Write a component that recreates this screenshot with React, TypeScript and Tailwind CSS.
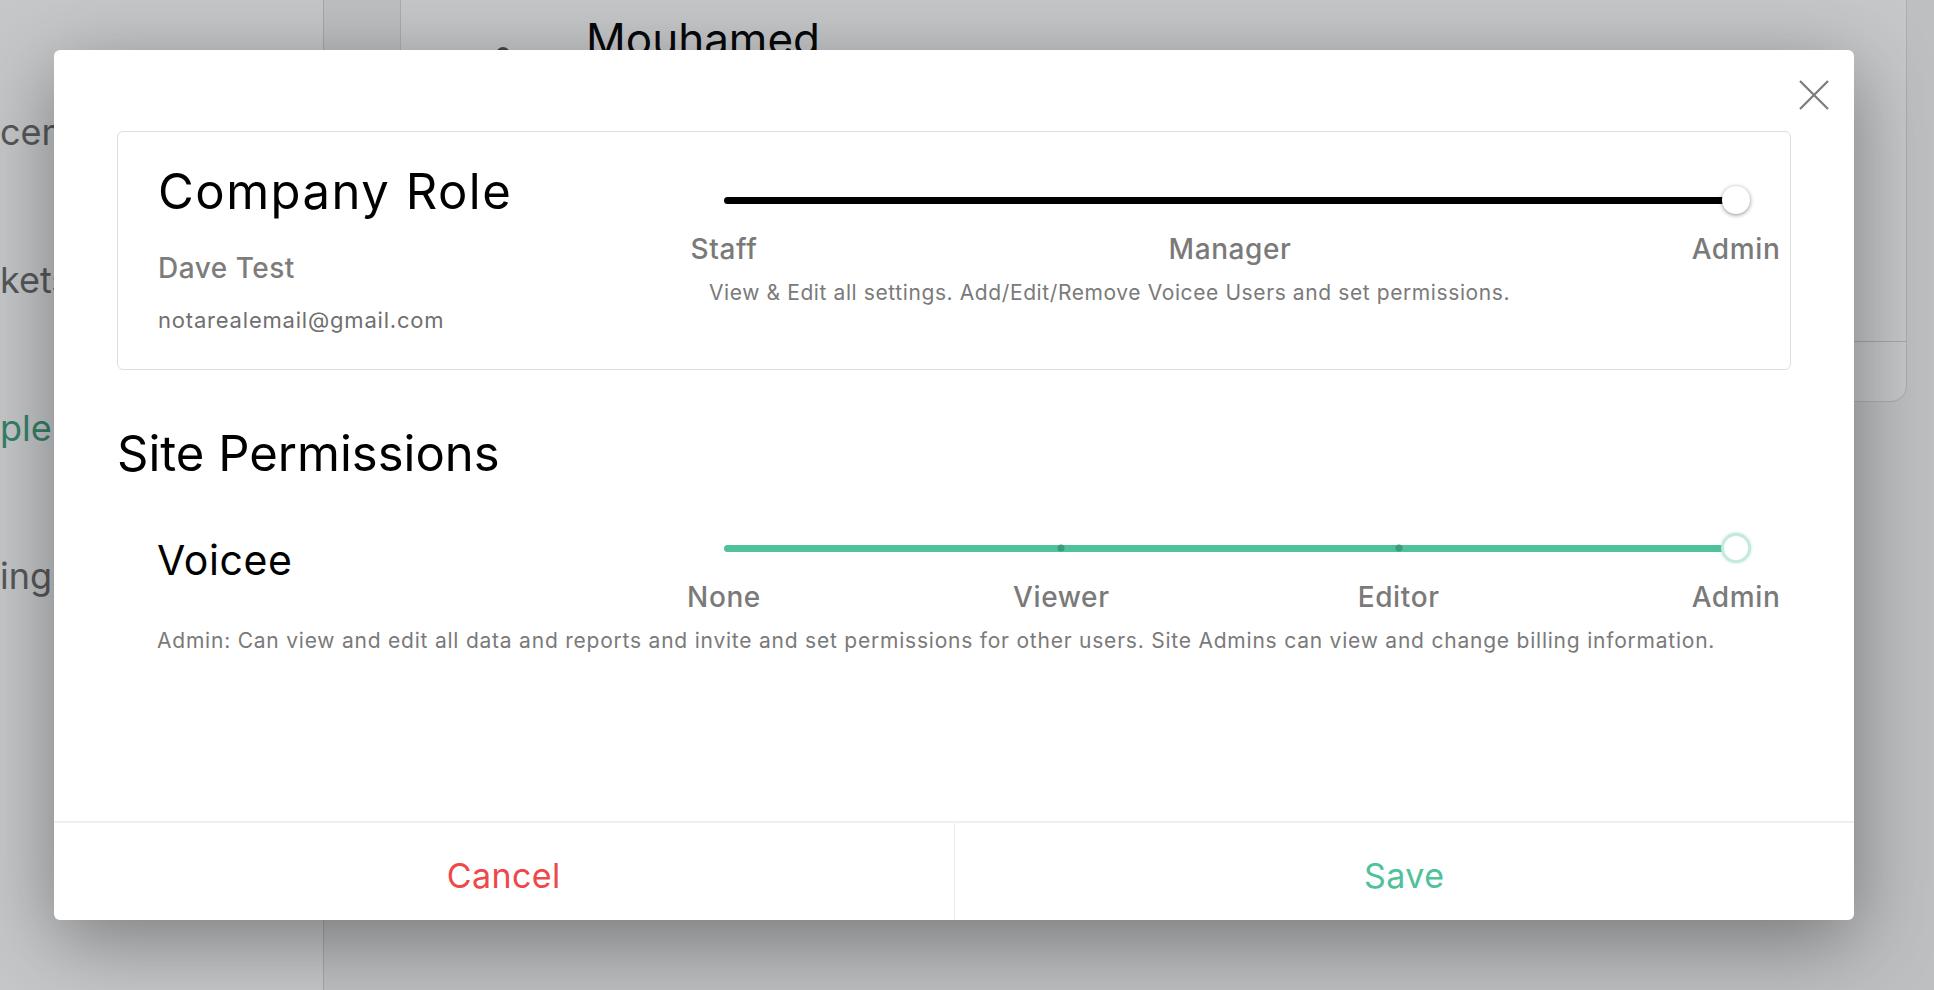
import React from "react";

type Variant = "dark" | "teal";

function StepSlider({ labels, variant }: { labels: string[]; variant: Variant }) {
  const steps = labels.length - 1;
  return (
    <div className="w-[1012px]">
      <div className="relative flex h-[30px] items-center">
        <div
          className={`h-[7px] w-full rounded-full ${
            variant === "dark" ? "bg-black" : "bg-[#4fc19b]"
          }`}
        />
        {variant === "teal" &&
          labels.slice(1, -1).map((l, i) => (
            <span
              key={l}
              className="absolute top-1/2 h-[7px] w-[7px] -translate-x-1/2 -translate-y-1/2 rounded-full bg-[#3a9c7b]"
              style={{ left: `${((i + 1) / steps) * 100}%` }}
            />
          ))}
        {variant === "dark" ? (
          <span className="absolute right-0 top-1/2 h-[28px] w-[28px] translate-x-1/2 -translate-y-1/2 rounded-full bg-white shadow-[0_1px_4px_rgba(0,0,0,0.45)]" />
        ) : (
          <span className="absolute right-0 top-1/2 h-[30px] w-[30px] translate-x-1/2 -translate-y-1/2 rounded-full border-[3px] border-[#c3eadc] bg-white shadow-[0_0_3px_rgba(79,193,155,0.4)]" />
        )}
      </div>
      <div className="relative mt-[17px] h-[34px]">
        {labels.map((l, i) => (
          <span
            key={l}
            className="absolute top-0 -translate-x-1/2 whitespace-nowrap text-[28px] font-medium leading-[34px] tracking-[0.6px] text-[#7a7a7a]"
            style={{ left: `${(i / steps) * 100}%` }}
          >
            {l}
          </span>
        ))}
      </div>
    </div>
  );
}

function CloseIcon() {
  return (
    <svg width="30" height="30" viewBox="0 0 30 30" fill="none">
      <path d="M1 1L29 29M29 1L1 29" stroke="#7b7b7b" strokeWidth="2.2" />
    </svg>
  );
}

function Background() {
  const items = [
    { text: "cements", color: "text-[#6b6b6b]" },
    { text: "kets", color: "text-[#6b6b6b]" },
    { text: "ple", color: "text-[#3fa37f]" },
    { text: "ings", color: "text-[#6b6b6b]" },
  ];
  return (
    <div className="flex h-full">
      <aside className="flex w-[324px] shrink-0 flex-col gap-[104px] border-r border-[#d4d4d6] bg-white pt-[110px]">
        {items.map((it) => (
          <span key={it.text} className={`text-[36px] leading-[44px] ${it.color}`}>
            {it.text}
          </span>
        ))}
      </aside>
      <main className="flex-1 pl-[76px] pr-[27px]">
        <div className="flex h-[402px] flex-col rounded-b-2xl border-x border-b border-[#dcdcde] bg-white">
          <div className="flex flex-1 items-start gap-[76px] pl-[95px] pt-[13px]">
            <span className="mt-[34px] h-[14px] w-[14px] rounded-full bg-[#555]" />
            <span className="text-[44px] leading-[52px] text-black">Mouhamed</span>
          </div>
          <div className="h-[60px] border-t border-[#d4d4d6]" />
        </div>
      </main>
    </div>
  );
}

export default function App() {
  return (
    <div className="relative h-[990px] w-full overflow-hidden bg-[#f4f4f5] [font-family:Inter,sans-serif]">
      <Background />
      <div className="absolute inset-0 bg-[rgba(27,31,39,0.25)]" />

      <div className="absolute left-[54px] top-[50px] flex h-[870px] w-[1800px] flex-col rounded-md bg-white shadow-[0_20px_80px_rgba(0,0,0,0.38)]">
        <button className="absolute right-[25px] top-[30px]">
          <CloseIcon />
        </button>

        <div className="px-[63px] pt-[81px]">
          <div className="flex h-[239px] rounded-md border border-[#dedede]">
            <div className="w-[568px] shrink-0 pl-[40px] pt-[32px]">
              <h2 className="text-[49px] leading-[55px] tracking-[1.5px] text-black">
                Company Role
              </h2>
              <p className="mt-[33px] text-[28px] font-medium leading-[32px] tracking-[0.5px] text-[#7c7c7c]">
                Dave Test
              </p>
              <p className="mt-[22px] text-[22px] leading-[28px] tracking-[0.8px] text-[#6f6f6f]">
                notarealemail@gmail.com
              </p>
            </div>
            <div className="pt-[53px]">
              <div className="ml-[38px]">
                <StepSlider labels={["Staff", "Manager", "Admin"]} variant="dark" />
              </div>
              <p className="ml-[23px] mt-[13px] text-[21px] leading-[28px] tracking-[0.6px] text-[#7a7a7a]">
                View &amp; Edit all settings. Add/Edit/Remove Voicee Users and set permissions.
              </p>
            </div>
          </div>

          <h2 className="mt-[56px] text-[49px] leading-[55px] text-black">Site Permissions</h2>

          <div className="mt-[52px] flex items-start">
            <div className="w-[607px] shrink-0 pl-[40px]">
              <h3 className="mt-[3px] text-[41px] leading-[48px] tracking-[0.6px] text-black">
                Voicee
              </h3>
            </div>
            <StepSlider labels={["None", "Viewer", "Editor", "Admin"]} variant="teal" />
          </div>
          <p className="mt-[13px] pl-[40px] text-[21px] leading-[28px] tracking-[0.78px] text-[#7a7a7a]">
            Admin: Can view and edit all data and reports and invite and set permissions for other
            users. Site Admins can view and change billing information.
          </p>
        </div>

        <div className="mt-auto flex h-[99px] border-t-2 border-[#efefef]">
          <button className="flex flex-1 items-center justify-center border-r border-[#ececec] pt-[8px] text-[34px] tracking-[0.4px] text-[#ef4848]">
            Cancel
          </button>
          <button className="flex flex-1 items-center justify-center pt-[8px] text-[34px] tracking-[0.4px] text-[#4fc19b]">
            Save
          </button>
        </div>
      </div>
    </div>
  );
}
